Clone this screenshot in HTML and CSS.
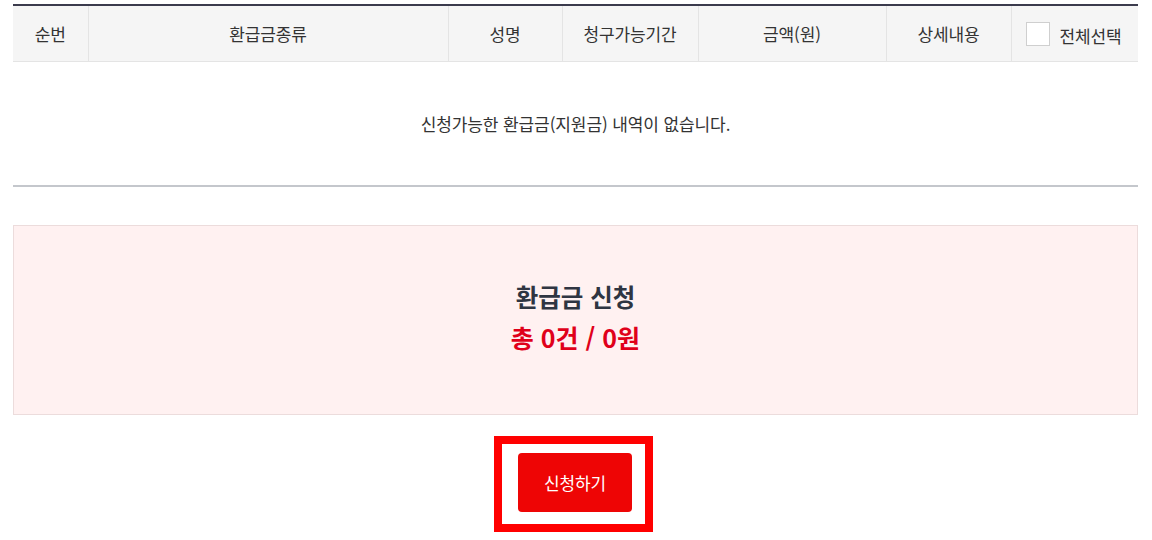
FILE: index.html
```html
<!DOCTYPE html>
<html lang="ko">
<head>
<meta charset="utf-8">
<title>환급금 신청</title>
<link rel="stylesheet" href="styles.css">
</head>
<body>
<div class="wrap">
  <table class="list">
    <colgroup>
      <col class="c1"><col class="c2"><col class="c3"><col class="c4"><col class="c5"><col class="c6"><col class="c7">
    </colgroup>
    <thead>
      <tr>
        <th>순번</th>
        <th>환급금종류</th>
        <th>성명</th>
        <th>청구가능기간</th>
        <th>금액(원)</th>
        <th>상세내용</th>
        <th class="chk"><label class="all"><span class="box"></span><span>전체선택</span></label></th>
      </tr>
    </thead>
    <tbody>
      <tr>
        <td colspan="7" class="empty">신청가능한 환급금(지원금) 내역이 없습니다.</td>
      </tr>
    </tbody>
  </table>

  <div class="summary">
    <p class="title">환급금 신청</p>
    <p class="total">총 0건 / 0원</p>
  </div>

  <div class="actions">
    <div class="highlight">
      <button class="apply" type="button">신청하기</button>
    </div>
  </div>
</div>
</body>
</html>
```
FILE: styles.css
```css
html, body {
  margin: 0;
  padding: 0;
  background: #ffffff;
}
body {
  font-family: "Noto Sans CJK KR", "Noto Sans", sans-serif;
  color: #333333;
}
.wrap {
  padding: 4px 14px 0 13px;
}
.list {
  width: 1125px;
  border-collapse: collapse;
  table-layout: fixed;
  border-top: 2px solid #3b3b4d;
}
.c1 { width: 75px; }
.c2 { width: 360px; }
.c3 { width: 114px; }
.c4 { width: 136px; }
.c5 { width: 188px; }
.c6 { width: 125px; }
.c7 { width: 127px; }
.list th {
  height: 55px;
  padding: 0;
  background: #f5f5f5;
  border-bottom: 1px solid #e4e4e4;
  border-left: 1px solid #e4e4e4;
  font-size: 17px;
  font-weight: 400;
  letter-spacing: -0.1px;
  color: #333333;
  text-align: center;
  vertical-align: middle;
}
.list th:first-child {
  border-left: 0;
}
.list th.chk {
  text-align: left;
  padding-left: 14px;
}
.all {
  display: flex;
  align-items: center;
  gap: 10px;
}
.box {
  width: 22px;
  height: 22px;
  border: 1px solid #cfcfcf;
  background: #ffffff;
  flex: none;
}
.all span:last-child {
  padding-top: 4px;
}
.empty {
  height: 123px;
  padding: 0;
  text-align: center;
  vertical-align: middle;
  font-size: 17px;
  letter-spacing: -0.1px;
  color: #333333;
  border-bottom: 2px solid #c4c7cc;
}
.summary {
  margin-top: 38px;
  width: 1123px;
  height: 182px;
  border: 1px solid #ecdcdc;
  background: #fff1f1;
  display: flex;
  flex-direction: column;
  align-items: center;
  justify-content: center;
  padding-bottom: 6px;
  box-sizing: content-box;
}
.summary p {
  margin: 0;
  line-height: 40px;
  font-weight: 700;
}
.title {
  font-size: 24.5px;
  color: #2f3542;
}
.total {
  font-size: 25px;
  color: #e0001a;
}
.actions {
  display: flex;
  justify-content: center;
  padding-top: 21px;
  width: 1125px;
}
.highlight {
  margin-left: -4px;
  border: 8px solid #ff0000;
  padding: 9px 13px 12px 16px;
}
.apply {
  display: block;
  width: 114px;
  height: 59px;
  border: 0;
  border-radius: 4px;
  background: #ee0505;
  color: #ffffff;
  font-family: "Noto Sans CJK KR", "Noto Sans", sans-serif;
  font-size: 17px;
  letter-spacing: -0.1px;
  padding: 0;
}
```
